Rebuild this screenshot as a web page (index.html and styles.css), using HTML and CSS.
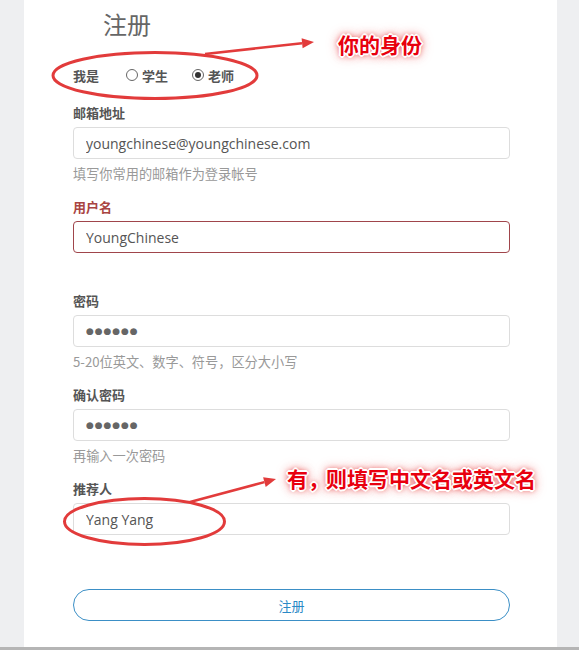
FILE: index.html
```html
<!DOCTYPE html>
<html lang="zh-CN">
<head>
<meta charset="utf-8">
<title>注册</title>
<link rel="stylesheet" href="styles.css">
</head>
<body>
<div class="page">
  <main class="card">
    <form class="form">
      <h1 class="title">注册</h1>
      <div class="role">
        <span class="role-label">我是</span>
        <label class="radio"><span class="dot"></span>学生</label>
        <label class="radio checked"><span class="dot"></span>老师</label>
      </div>
      <div class="group">
        <div class="label">邮箱地址</div>
        <input class="field" type="text" value="youngchinese@youngchinese.com">
        <div class="help">填写你常用的邮箱作为登录帐号</div>
      </div>
      <div class="group error">
        <div class="label">用户名</div>
        <input class="field" type="text" value="YoungChinese">
        <div class="help"></div>
      </div>
      <div class="group">
        <div class="label">密码</div>
        <input class="field pw" type="text" value="●●●●●●">
        <div class="help">5-20位英文、数字、符号，区分大小写</div>
      </div>
      <div class="group">
        <div class="label">确认密码</div>
        <input class="field pw" type="text" value="●●●●●●">
        <div class="help">再输入一次密码</div>
      </div>
      <div class="group">
        <div class="label">推荐人</div>
        <input class="field" type="text" value="Yang Yang">
        <div class="help"></div>
      </div>
      <button class="submit" type="button">注册</button>
    </form>
  </main>
  <div class="bar"></div>

  <svg class="annot" width="579" height="650" viewBox="0 0 579 650">
    <ellipse cx="155" cy="75.5" rx="102" ry="23" fill="none" stroke="#e23b3b" stroke-width="3"/>
    <line x1="205" y1="54" x2="302" y2="43.3" stroke="#e23b3b" stroke-width="2.5"/>
    <polygon points="314,42 302.6,48.3 301.6,38.3" fill="#e23b3b"/>
    <ellipse cx="144.5" cy="521.5" rx="80" ry="23" fill="none" stroke="#e23b3b" stroke-width="3"/>
    <line x1="190" y1="502" x2="264.4" y2="482.1" stroke="#e23b3b" stroke-width="2.5"/>
    <polygon points="276,479 265.7,486.9 263.1,477.3" fill="#e23b3b"/>
  </svg>
  <div class="note note-role">你的身份</div>
  <div class="note note-ref">有<span class="comma">，</span>则填写中文名或英文名</div>
</div>
</body>
</html>
```

FILE: styles.css
```css
* { box-sizing: border-box; }
html, body { margin: 0; padding: 0; }
body {
  background: #eeeff1;
  font-family: "Open Sans", "Noto Sans CJK SC", sans-serif;
  color: #555;
}
.page {
  position: relative;
  width: 579px;
  height: 650px;
  display: flex;
  flex-direction: column;
  overflow: hidden;
}
.card {
  width: 533px;
  height: 647px;
  margin-left: 24px;
  background: #fff;
  padding: 8px 47px 0 49px;
}
.bar {
  height: 3px;
  background: #b5b5b5;
}
.form {
  display: flex;
  flex-direction: column;
  width: 437px;
}
.title {
  margin: 0 0 0 30px;
  font-size: 24px;
  line-height: 32px;
  font-weight: normal;
  color: #666;
  font-family: "Noto Sans CJK SC", sans-serif;
}
.role {
  display: flex;
  align-items: center;
  height: 20px;
  margin-top: 25px;
  margin-bottom: 18px;
  font-size: 13px;
  font-weight: bold;
  font-family: "Noto Sans CJK SC", sans-serif;
}
.role-label { margin-right: 27px; }
.radio {
  display: flex;
  align-items: center;
  gap: 4px;
  margin-right: 24px;
}
.dot {
  width: 12px;
  height: 12px;
  border: 1px solid #666;
  border-radius: 50%;
  display: flex;
  align-items: center;
  justify-content: center;
}
.checked .dot::after {
  content: "";
  width: 6px;
  height: 6px;
  border-radius: 50%;
  background: #333;
}
.group {
  display: flex;
  flex-direction: column;
  margin-bottom: 13px;
}
.label {
  font-family: "Noto Sans CJK SC", sans-serif;
  font-size: 13px;
  line-height: 20px;
  font-weight: bold;
  color: #555;
  margin-bottom: 4px;
}
.field {
  width: 437px;
  height: 32px;
  border: 1px solid #ddd;
  border-radius: 4px;
  padding: 0 12px;
  font-family: "Open Sans", "Noto Sans CJK SC", sans-serif;
  font-size: 14px;
  color: #555;
  background: #fff;
  outline: none;
}
.field.pw {
  font-family: "DejaVu Sans", sans-serif;
  font-size: 9px;
  letter-spacing: 0.9px;
  color: #666;
}
.help {
  height: 20px;
  margin-top: 5px;
  font-family: "Noto Sans CJK SC", sans-serif;
  font-size: 13.2px;
  line-height: 20px;
  color: #999;
}
.error .label { color: #a94442; }
.error .field { border-color: #a0454b; }
.submit {
  margin-top: 16px;
  width: 437px;
  height: 32px;
  border: 1px solid #3b8fc6;
  border-radius: 16px;
  background: #fff;
  color: #2a89c6;
  font-family: "Noto Sans CJK SC", sans-serif;
  font-size: 13px;
  padding: 0;
}
.annot {
  position: absolute;
  left: 0;
  top: 0;
  pointer-events: none;
}
.note {
  position: absolute;
  font-family: "Noto Sans CJK SC", sans-serif;
  font-weight: bold;
  font-size: 21px;
  line-height: 24px;
  color: #e8000e;
  white-space: nowrap;
  text-shadow:
    -1px -1px 0 #fff, 1px -1px 0 #fff, -1px 1px 0 #fff, 1px 1px 0 #fff,
    0 -2px 0 #fff, 0 2px 0 #fff, -2px 0 0 #fff, 2px 0 0 #fff,
    0 0 5px rgba(230, 40, 40, 0.9), 0 0 9px rgba(230, 40, 40, 0.7), 0 0 14px rgba(230, 40, 40, 0.4);
}
.comma { letter-spacing: -9px; margin-right: 6px; }
.note-role { left: 338px; top: 32px; }
.note-ref { left: 287px; top: 466px; }
```
